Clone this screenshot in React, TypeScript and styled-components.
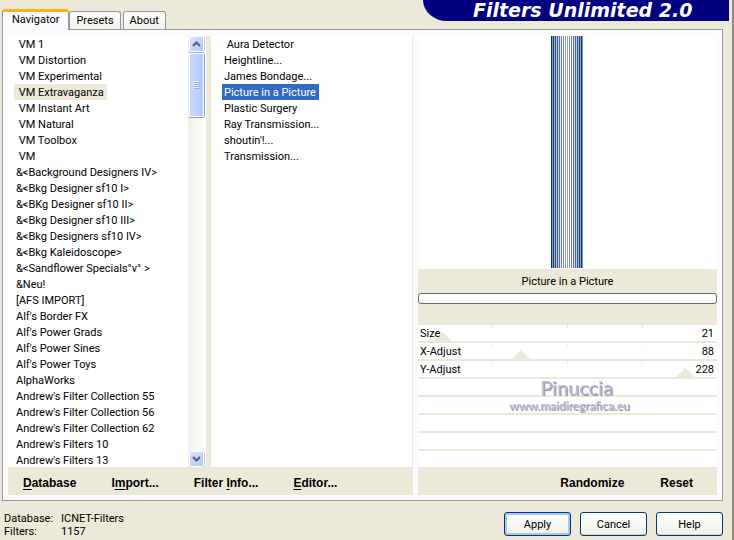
import React, { useState } from "react";
import styled, { createGlobalStyle, css } from "styled-components";

const face = "#ece9d8";
const edge = "#919b9c";

const GlobalStyle = createGlobalStyle`
  *, *::before, *::after { box-sizing: border-box; }
  body { margin: 0; background: ${face}; }
  button, input { font: inherit; color: inherit; }
  ul { list-style: none; margin: 0; padding: 0; }
`;

const Window = styled.main`
  display: flex;
  flex-direction: column;
  min-height: 100vh;
  padding: 0 3px 0 2px;
  background: ${face};
  border-right: 2px solid #8f8d80;
  color: #000;
  font: 11px/16px Roboto, "Liberation Sans", Arial, sans-serif;
  overflow: hidden;
`;

const Header = styled.header`
  display: flex;
  justify-content: space-between;
  align-items: flex-start;
  height: 29px;
`;

const Tabs = styled.nav`
  display: flex;
  align-items: flex-end;
  align-self: stretch;
`;

const Tab = styled.button<{ $active?: boolean }>`
  height: 18px;
  padding: 1px 6px 0;
  margin-right: 2px;
  border: 1px solid ${edge};
  border-bottom: 0;
  border-radius: 3px 3px 0 0;
  background: linear-gradient(#fff, #f2f1ea);
  line-height: 16px;
  ${(p) =>
    p.$active &&
    css`
      z-index: 1;
      height: 21px;
      margin: 0 0 -1px;
      padding: 0 9px 2px;
      border-top: 3px solid #ffb11c;
      background: #fcfcfe;
    `}
`;

const Banner = styled.h1`
  width: 306px;
  height: 21px;
  margin: 0;
  padding-left: 50px;
  border-bottom-left-radius: 24px 21px;
  background: #000080;
  color: #fff;
  font: italic bold 19px/21px "DejaVu Sans", sans-serif;
  white-space: nowrap;
`;

const Panel = styled.section`
  display: grid;
  grid-template-columns: minmax(0, 405fr) minmax(0, 299fr);
  gap: 5px;
  margin-right: 6px;
  padding: 6px 5px 5px;
  border: 1px solid ${edge};
  background: #fcfcfe;
`;

const Column = styled.div`
  display: flex;
  flex-direction: column;
  min-width: 0;
`;

const Browser = styled(Column)`
  border-right: 1px solid ${face};
`;

const Lists = styled.div`
  display: grid;
  grid-template-columns: minmax(0, 180fr) 17px 6px minmax(0, 201fr);
  height: 431px;
  background: #fff;
`;

const Divider = styled.div`
  border-left: 1px solid #fff;
  background: ${face};
`;

const List = styled.ul<{ $inset: number }>`
  padding-left: ${(p) => p.$inset}px;
  overflow: hidden;
`;

const Item = styled.button<{ $mark?: "dim" | "active" }>`
  display: block;
  height: 16px;
  padding: 1px 3px 0 2px;
  border: 0;
  background: ${(p) => (p.$mark === "active" ? "#316ac5" : p.$mark === "dim" ? face : "transparent")};
  color: ${(p) => (p.$mark === "active" ? "#fff" : "#000")};
  line-height: 15px;
  white-space: pre;
`;

const ScrollBar = styled.div`
  display: flex;
  flex-direction: column;
  background: linear-gradient(90deg, #f1f0e8, #fefefb);
`;

const ScrollButton = styled.button`
  display: grid;
  place-items: center;
  width: 15px;
  height: 16px;
  margin: 0 1px;
  padding: 0;
  border: 1px solid #fff;
  border-radius: 2px;
  background: linear-gradient(135deg, #dbe4fd, #b2c7f8);
  box-shadow: 0 1px 0 #8fadd9, 1px 0 0 #b6c9ec;
`;

const ScrollThumb = styled.div`
  display: grid;
  place-items: center;
  width: 15px;
  height: 64px;
  margin: 1px 1px auto;
  border: 1px solid #fff;
  border-radius: 2px;
  background: linear-gradient(90deg, #cad8fd, #b5c9fb);
  box-shadow: 0 1px 0 #7f9fd3, 1px 0 0 #7f9fd3;
`;

const Actions = styled.div<{ $end?: boolean }>`
  display: flex;
  justify-content: ${(p) => (p.$end ? "flex-end" : "flex-start")};
  gap: ${(p) => (p.$end ? 36 : 35)}px;
  height: 28px;
  padding: ${(p) => (p.$end ? "0 24px 0 0" : "0 0 0 15px")};
  background: ${face};
`;

const Action = styled.button`
  padding: 0;
  border: 0;
  background: none;
  font: bold 12px/32px "Liberation Sans", Arial, sans-serif;
  u { text-underline-offset: 2px; }
`;

const Preview = styled.div`
  display: flex;
  justify-content: center;
  height: 233px;
  padding: 0 1px 1px 0;
  background: #fff;
`;

const Status = styled.div`
  height: 56px;
  padding: 5px 0 0;
  background: ${face};
  text-align: center;
`;

const Progress = styled.div`
  height: 11px;
  margin-top: 3px;
  border: 1px solid #686868;
  border-radius: 3px;
  background: #fff;
`;

const Params = styled.div`
  position: relative;
  display: grid;
  grid-auto-rows: 16px;
  gap: 2px;
  background: ${face};
`;

const ParamRow = styled.div`
  display: grid;
  grid-template-columns: minmax(0, 1fr);
  background: #fff;
  overflow: hidden;
  > * { grid-area: 1 / 1; }
`;

const Caption = styled.div`
  z-index: 1;
  display: flex;
  justify-content: space-between;
  padding: 1px 3px 0 2px;
  line-height: 15px;
  pointer-events: none;
`;

const Ticks = styled.div`
  display: flex;
  justify-content: space-evenly;
  height: 3px;
  i { width: 1px; background: ${face}; }
`;

const Slider = styled.input`
  appearance: none;
  width: calc(100% + 18px);
  height: 16px;
  margin: 0 -9px;
  background: transparent;
  &::-webkit-slider-thumb {
    appearance: none;
    width: 18px;
    height: 9px;
    margin-top: 7px;
    background: ${face};
    clip-path: polygon(50% 0, 100% 100%, 0 100%);
  }
`;

const Watermark = styled.div`
  position: absolute;
  top: 52px;
  left: 0;
  right: 0;
  display: flex;
  flex-direction: column;
  align-items: center;
  gap: 3px;
  padding-left: 4px;
  color: #b9b8cf;
  font-family: Lato, "Open Sans", sans-serif;
  text-shadow: 1px 1px 0 #9392a8;
  pointer-events: none;
`;

const WatermarkName = styled.span`
  padding-left: 14px;
  font-size: 20px;
  line-height: 20px;
`;

const WatermarkUrl = styled.span`
  font-size: 12px;
  line-height: 12px;
`;

const Footer = styled.footer`
  display: flex;
  justify-content: space-between;
  padding: 11px 6px 0 2px;
`;

const Facts = styled.dl`
  display: grid;
  grid-template-columns: 57px auto;
  grid-auto-rows: 13px;
  margin: 0;
  line-height: 13px;
  dd { margin: 0; }
`;

const Buttons = styled.div`
  display: flex;
  gap: 9px;
`;

const PushButton = styled.button<{ $primary?: boolean }>`
  width: 67px;
  height: 24px;
  padding: 1px 0 0;
  border: 1px solid #003c74;
  border-radius: 3px;
  background: linear-gradient(#fff, #f0f0ea);
  box-shadow: ${(p) => (p.$primary ? "inset 0 0 0 2px #a9c3f3" : "inset 0 -1px 0 #d6d0c5")};
`;

const categories = [
  " VM 1", " VM Distortion", " VM Experimental", " VM Extravaganza", " VM Instant Art", " VM Natural",
  " VM Toolbox", " VM", "&<Background Designers IV>", "&<Bkg Designer sf10 I>", "&<BKg Designer sf10 II>",
  "&<Bkg Designer sf10 III>", "&<Bkg Designers sf10 IV>", "&<Bkg Kaleidoscope>", "&<Sandflower Specials°v° >",
  "&Neu!", "[AFS IMPORT]", "Alf's Border FX", "Alf's Power Grads", "Alf's Power Sines", "Alf's Power Toys",
  "AlphaWorks", "Andrew's Filter Collection 55", "Andrew's Filter Collection 56",
  "Andrew's Filter Collection 62", "Andrew's Filters 10", "Andrew's Filters 13",
];

const filters = [
  " Aura Detector", "Heightline...", "James Bondage...", "Picture in a Picture", "Plastic Surgery",
  "Ray Transmission...", "shoutin'!...", "Transmission...",
];

const params = [
  { name: "Size", value: 21 },
  { name: "X-Adjust", value: 88 },
  { name: "Y-Adjust", value: 228 },
];

const mix = (a: number[], b: number[], t: number) =>
  `rgb(${a.map((v, i) => Math.round(v + (b[i] - v) * t)).join(",")})`;

function Stripes() {
  return (
    <svg width="32" height="100%" viewBox="0 0 32 1" preserveAspectRatio="none" shapeRendering="crispEdges" aria-hidden="true">
      {Array.from({ length: 32 }, (_, x) => {
        const t = 1 - Math.abs(x - 15.5) / 15.5;
        const fill = x % 2 ? mix([110, 150, 200], [255, 255, 255], Math.min(1, t * 1.4)) : mix([10, 45, 100], [160, 166, 184], t);
        return <rect key={x} x={x} width="1" height="1" fill={fill} />;
      })}
    </svg>
  );
}

const Chevron = ({ down }: { down?: boolean }) => (
  <svg width="9" height="6" viewBox="0 0 9 6" fill="none" stroke="#4d6185" strokeWidth="2" aria-hidden="true">
    <path d={down ? "M1 1l3.5 3.5L8 1" : "M1 5l3.5-3.5L8 5"} />
  </svg>
);

function Param({ name, value }: { name: string; value: number }) {
  const [current, setCurrent] = useState(value);
  const id = `param-${name}`;
  return (
    <ParamRow>
      <Ticks><i /><i /><i /></Ticks>
      <Slider id={id} type="range" min={0} max={255} value={current} onChange={(e) => setCurrent(Number(e.target.value))} />
      <Caption>
        <label htmlFor={id}>{name}</label>
        <output htmlFor={id}>{current}</output>
      </Caption>
    </ParamRow>
  );
}

export default function App() {
  const [category, setCategory] = useState(" VM Extravaganza");
  const [filter, setFilter] = useState("Picture in a Picture");
  return (
    <Window>
      <GlobalStyle />
      <Header>
        <Tabs>
          <Tab $active>Navigator</Tab>
          <Tab>Presets</Tab>
          <Tab>About</Tab>
        </Tabs>
        <Banner>Filters Unlimited 2.0</Banner>
      </Header>
      <Panel>
        <Browser>
          <Lists>
            <List $inset={6}>
              {categories.map((c) => (
                <li key={c}><Item $mark={c === category ? "dim" : undefined} onClick={() => setCategory(c)}>{c}</Item></li>
              ))}
            </List>
            <ScrollBar>
              <ScrollButton aria-label="Scroll up"><Chevron /></ScrollButton>
              <ScrollThumb>
                <svg width="7" height="8" viewBox="0 0 7 8" stroke="#eef4fe" aria-hidden="true">
                  <path d="M0 .5h6M0 2.5h6M0 4.5h6M0 6.5h6" />
                  <path d="M1 1.5h6M1 3.5h6M1 5.5h6M1 7.5h6" stroke="#8cb0f8" />
                </svg>
              </ScrollThumb>
              <ScrollButton aria-label="Scroll down"><Chevron down /></ScrollButton>
            </ScrollBar>
            <Divider />
            <List $inset={11}>
              {filters.map((f) => (
                <li key={f}><Item $mark={f === filter ? "active" : undefined} onClick={() => setFilter(f)}>{f}</Item></li>
              ))}
            </List>
          </Lists>
          <Actions>
            <Action><u>D</u>atabase</Action>
            <Action>I<u>m</u>port...</Action>
            <Action>Filter <u>I</u>nfo...</Action>
            <Action><u>E</u>ditor...</Action>
          </Actions>
        </Browser>
        <Column>
          <Preview><Stripes /></Preview>
          <Status>
            {filter}
            <Progress role="progressbar" aria-label="Progress" />
          </Status>
          <Params>
            {params.map((p) => <Param key={p.name} {...p} />)}
            {[3, 4, 5, 6, 7].map((n) => <ParamRow key={n} />)}
            <Watermark>
              <WatermarkName>Pinuccia</WatermarkName>
              <WatermarkUrl>www.maidiregrafica.eu</WatermarkUrl>
            </Watermark>
          </Params>
          <Actions $end>
            <Action>Randomize</Action>
            <Action>Reset</Action>
          </Actions>
        </Column>
      </Panel>
      <Footer>
        <Facts>
          <dt>Database:</dt><dd>ICNET-Filters</dd>
          <dt>Filters:</dt><dd>1157</dd>
        </Facts>
        <Buttons>
          <PushButton $primary>Apply</PushButton>
          <PushButton>Cancel</PushButton>
          <PushButton>Help</PushButton>
        </Buttons>
      </Footer>
    </Window>
  );
}
